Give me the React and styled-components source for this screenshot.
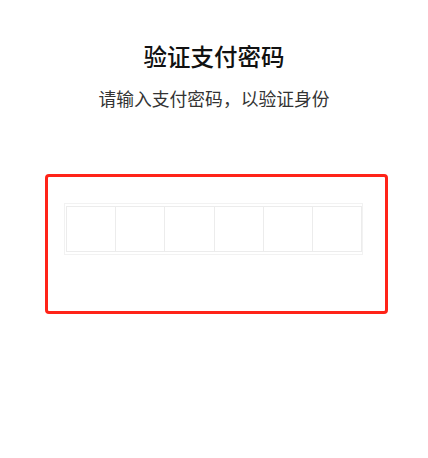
import React, { useState } from 'react';
import styled, { createGlobalStyle } from 'styled-components';

const GlobalStyle = createGlobalStyle`
  html, body {
    margin: 0;
    padding: 0;
    background: #fff;
  }
  body {
    font-family: "Noto Sans CJK SC", "Noto Sans", sans-serif;
  }
`;

const Page = styled.div`
  width: 428px;
  height: 458px;
  background: #fff;
  padding-top: 38px;
  box-sizing: border-box;
`;

const Title = styled.h2`
  margin: 0;
  text-align: center;
  font-size: 23.5px;
  line-height: 36px;
  font-weight: 500;
  color: #111;
`;

const Subtitle = styled.p`
  margin: 12px 0 0;
  text-align: center;
  font-size: 17.8px;
  line-height: 24px;
  color: #333;
`;

const Highlight = styled.div`
  margin: 64px 0 0 45px;
  width: 343px;
  height: 140px;
  box-sizing: border-box;
  border: 3px solid #ff2318;
  border-radius: 4px;
  padding: 26px 0 0 16px;
`;

const CodeRow = styled.div`
  display: flex;
  width: 299px;
  height: 52px;
  box-sizing: border-box;
  border: 1px solid #f2f2f2;
  padding: 2px 0 2px 1px;
`;

const Cell = styled.input`
  flex: 1;
  min-width: 0;
  height: 100%;
  box-sizing: border-box;
  border: 1px solid #ececec;
  border-left: ${(p) => (p.$first ? '1px solid #ececec' : 'none')};
  background: #fff;
  padding: 0;
  text-align: center;
  font-size: 20px;
  outline: none;
`;

const VerifyPayPassword = () => {
  const [digits, setDigits] = useState(['', '', '', '', '', '']);

  const onChange = (i, value) => {
    const next = [...digits];
    next[i] = value.slice(-1);
    setDigits(next);
  };

  return (
    <Page>
      <Title>验证支付密码</Title>
      <Subtitle>请输入支付密码，以验证身份</Subtitle>
      <Highlight>
        <CodeRow>
          {digits.map((d, i) => (
            <Cell
              key={i}
              $first={i === 0}
              type="password"
              maxLength={1}
              value={d}
              onChange={(e) => onChange(i, e.target.value)}
            />
          ))}
        </CodeRow>
      </Highlight>
    </Page>
  );
};

export default function App() {
  return (
    <>
      <GlobalStyle />
      <VerifyPayPassword />
    </>
  );
}
